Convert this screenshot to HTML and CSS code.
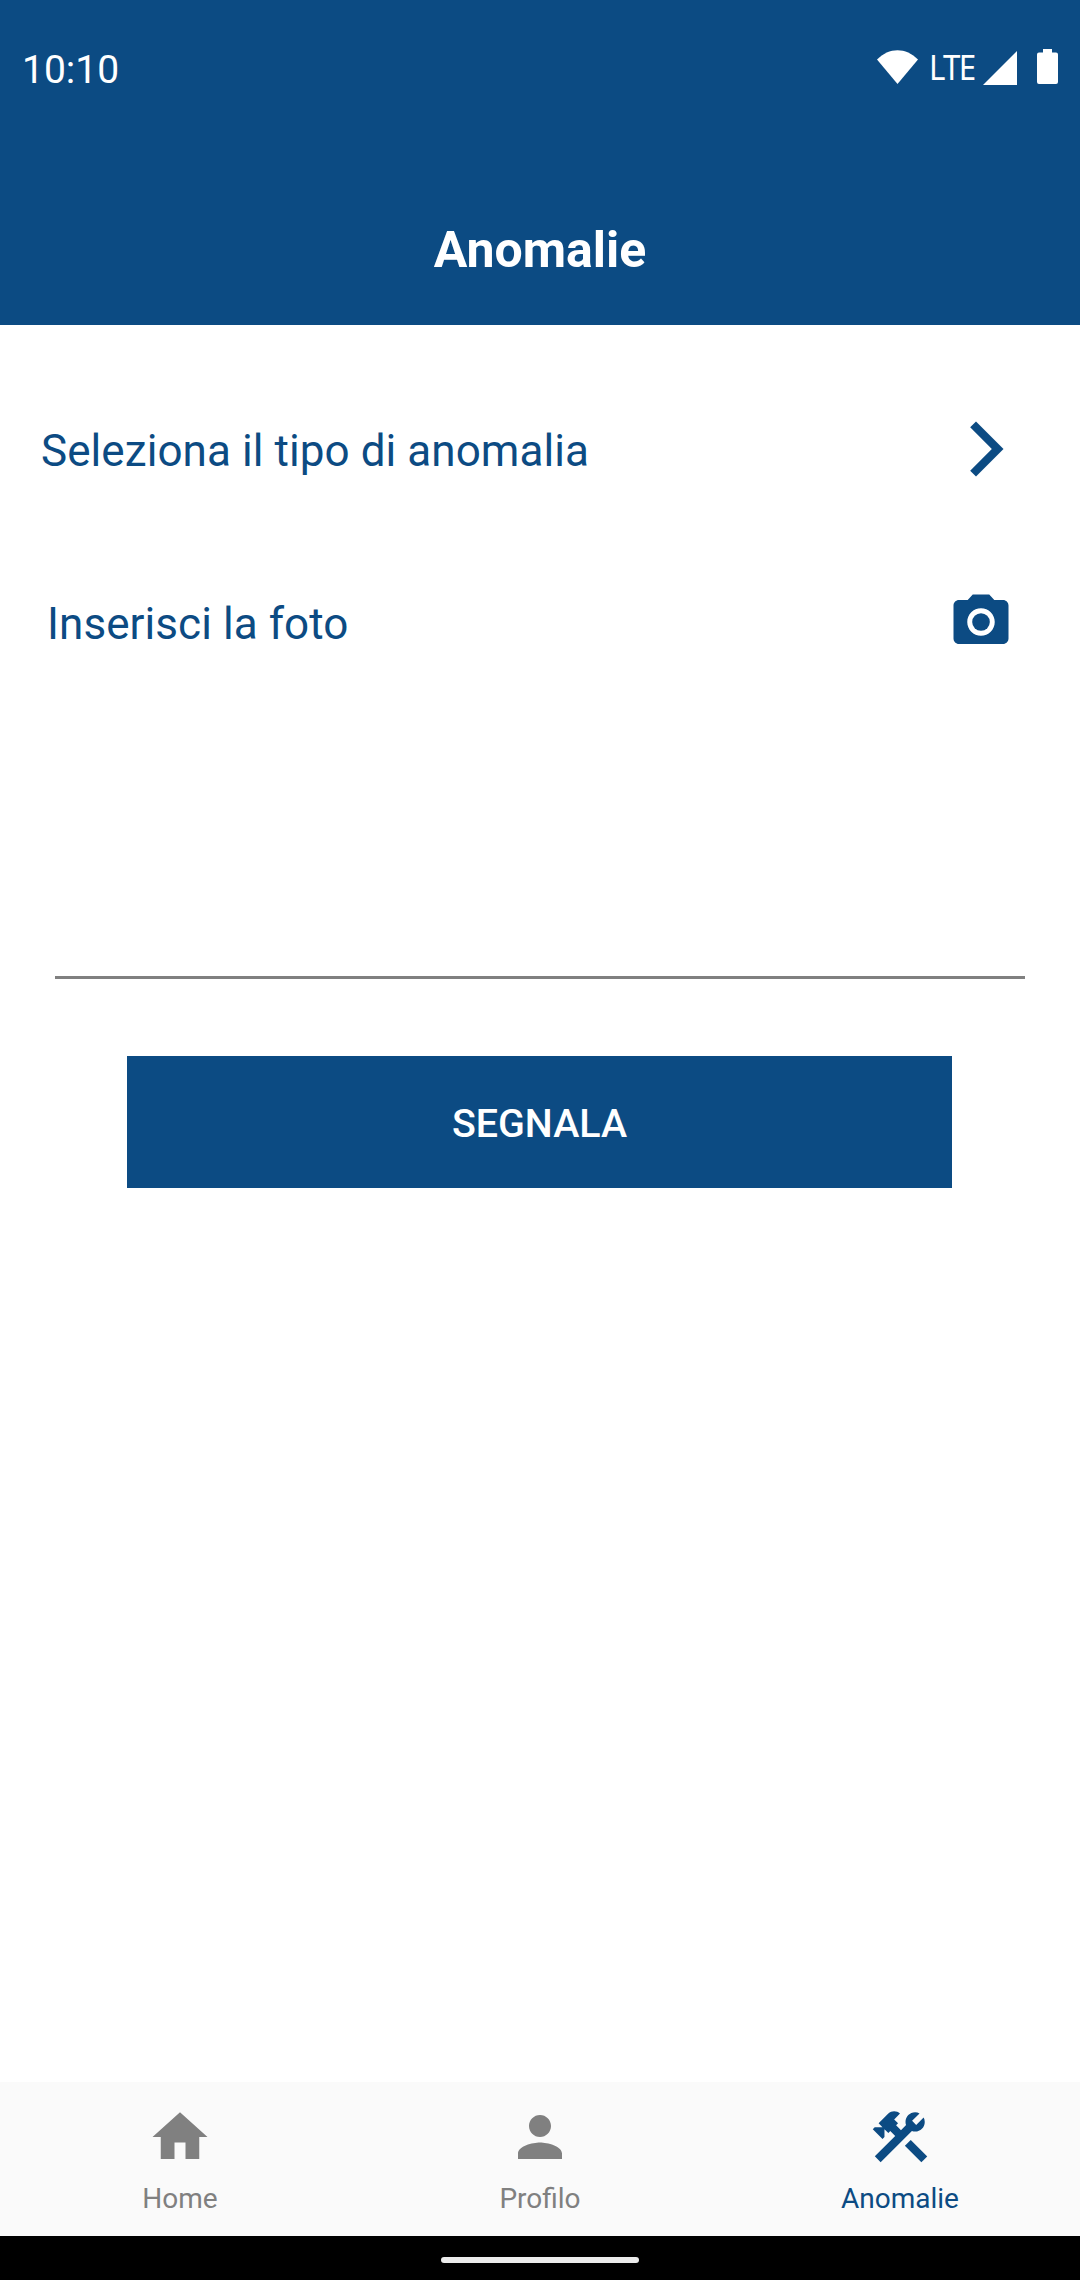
FILE: index.html
```
<!DOCTYPE html>
<html lang="it">
<head>
    <meta charset="UTF-8">
    <meta name="viewport" content="width=device-width, initial-scale=1.0">
    <title>Anomalie</title>
    <link rel="stylesheet" href="styles.css">
</head>
<body>
    <header class="header">
        <div class="status">
            <span class="time">10:10</span>
            <div class="status-icons">
                <svg class="wifi" width="41" height="34" viewBox="0 0 41 34"><path d="M0 9.5C12-3 29-3 41 9.5L20.5 34z"/></svg>
                <span class="lte">LTE</span>
                <svg class="signal" width="34" height="34" viewBox="0 0 34 34"><path d="M34 0v34H0z"/></svg>
                <svg class="battery" width="21" height="35" viewBox="0 0 21 35"><path d="M6 0h9v3.5h4a2 2 0 0 1 2 2V33a2 2 0 0 1-2 2H2a2 2 0 0 1-2-2V5.500a2 2 0 0 1 2-2h4z"/></svg>
            </div>
        </div>
        <h1 class="title">Anomalie</h1>
    </header>
    <main class="content">
        <div class="row type">
            <span>Seleziona il tipo di anomalia</span>
            <svg class="icon" viewBox="0 0 24 24"><path d="M5.880 4.120L13.760 12l-7.880 7.880L8 22l10-10L8 2z"/></svg>
        </div>
        <div class="row photo">
            <span>Inserisci la foto</span>
            <svg class="icon" viewBox="0 0 24 24"><circle cx="12" cy="12" r="3.200"/><path d="M9 2L7.170 4H4c-1.100 0-2 .9-2 2v12c0 1.100.9 2 2 2h16c1.100 0 2-.9 2-2V6c0-1.100-.9-2-2-2h-3.170L15 2H9zm3 15c-2.760 0-5-2.240-5-5s2.240-5 5-5 5 2.240 5 5-2.240 5-5 5z"/></svg>
        </div>
        <div class="note"></div>
        <button class="send">SEGNALA</button>
    </main>
    <nav class="tabs">
        <div class="tab">
            <svg class="icon" viewBox="0 0 24 24"><path d="M10 20v-6h4v6h5v-8h3L12 3 2 12h3v8z"/></svg>
            <span>Home</span>
        </div>
        <div class="tab">
            <svg class="icon" viewBox="0 0 24 24"><path d="M12 12c2.210 0 4-1.790 4-4s-1.790-4-4-4-4 1.790-4 4 1.790 4 4 4zm0 2c-2.670 0-8 1.340-8 4v2h16v-2c0-2.660-5.330-4-8-4z"/></svg>
            <span>Profilo</span>
        </div>
        <div class="tab active">
            <svg class="icon" viewBox="0 0 24 24"><rect x="16.340" y="12.870" width="3" height="8.480" transform="matrix(0.7071 -0.7071 0.7071 0.7071 -6.8717 17.6255)"/><path d="M17.500 10c1.930 0 3.500-1.570 3.500-3.500c0-.58-.16-1.120-.41-1.600l-2.700 2.700L16.400 6.110l2.700-2.700C18.620 3.160 18.080 3 17.500 3C15.570 3 14 4.570 14 6.500c0 .41.080.8.210 1.160l-1.850 1.850l-1.780-1.780l.71-.71L9.880 5.610L12 3.490c-1.170-1.170-3.070-1.170-4.240 0L4.220 7.030l1.410 1.410H2.810L2.100 9.150l3.540 3.540l.71-.71V9.150l1.410 1.410l.71-.71l1.780 1.780l-7.410 7.410l2.120 2.120L16.340 9.790C16.700 9.920 17.090 10 17.500 10z"/></svg>
            <span>Anomalie</span>
        </div>
    </nav>
    <div class="gesture"><div class="pill"></div></div>
</body>
</html>
```
FILE: styles.css
```
body{
    margin:0;
    height:2280px;
    display:flex;
    flex-direction:column;
    background-color:#fff;
    font-family:Roboto, sans-serif;
}
svg{
    display:block;
    flex:none;
    fill:currentColor;
}
.icon{
    width:66px;
    height:66px;
}
.header{
    height:325px;
    background-color:#0c4b83;
    color:white;
}
.status{
    display:flex;
    justify-content:space-between;
    height:136px;
    padding:0 22px;
}
.time{
    margin-top:47px;
    font-size:39px;
    line-height:46px;
}
.status-icons{
    display:flex;
    align-items:flex-start;
}
.wifi{
    margin-top:50px;
}
.lte{
    width:54px;
    margin:44px 0 0 11px;
    font-family:"Noto Sans", sans-serif;
    font-size:34px;
    line-height:46px;
    letter-spacing:-1.8px;
    transform:scaleX(0.92);
    transform-origin:left;
}
.signal{
    margin-top:51px;
}
.battery{
    margin:49px 0 0 20px;
}
.title{
    margin:0;
    padding-top:84px;
    text-align:center;
    font-size:50px;
    line-height:60px;
    font-weight:bold;
}
.content{
    flex:1;
    color:#0c4b83;
}
.row{
    display:flex;
    justify-content:space-between;
    font-size:44px;
    line-height:52px;
    letter-spacing:0.07px;
}
.type{
    padding:91px 60px 0 41px;
}
.photo{
    padding:107px 66px 0 47px;
}
.row span{
    margin-top:9px;
}
/* multi-line description field, only its underline shows */
.note{
    height:321px;
    margin:0 55px;
    border-bottom:3px solid #808080;
}
.send{
    display:block;
    width:825px;
    height:132px;
    margin:77px 0 0 127px;
    padding:2px 0 0;
    border:none;
    background-color:#0c4b83;
    color:white;
    font-family:Roboto, sans-serif;
    font-size:39.4px;
    font-weight:500;
}
.tabs{
    display:flex;
    height:154px;
    background-color:#fafafa;
    color:#808080;
}
.tab{
    flex:1;
    display:flex;
    flex-direction:column;
    align-items:center;
    padding-top:22px;
    font-size:28px;
    line-height:34px;
}
.tab span{
    margin-top:12px;
}
.active{
    color:#0c4b83;
}
.gesture{
    display:flex;
    height:44px;
    background-color:black;
}
.pill{
    width:198px;
    height:6px;
    margin:21px auto 0;
    border-radius:3px;
    background-color:#ebebeb;
}
```
